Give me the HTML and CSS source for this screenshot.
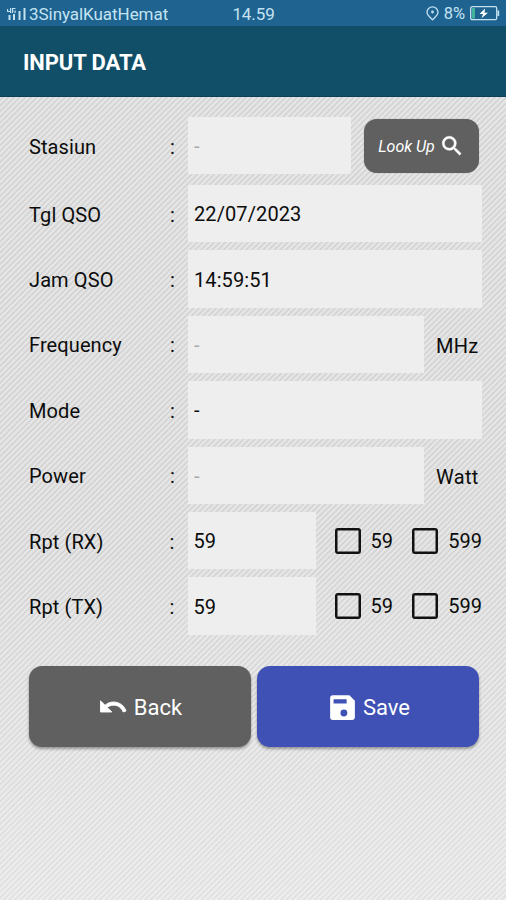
FILE: index.html
```html
<!DOCTYPE html>
<html lang="id">
<head>
    <meta charset="UTF-8">
    <meta name="viewport" content="width=device-width, initial-scale=1.0">
    <title>Input Data</title>
    <link rel="stylesheet" href="styles.css">
</head>
<body>
    <div class="statusbar">
        <div class="carrier">
            <svg class="signal" width="20" height="14" viewBox="0 0 20 14" fill="currentColor">
                <path d="M0 2h1.2v2H3V1h1.2v5H3V5H0zM5 1h3.5v1.1H6.2v3.9H5zM7.5 3.5h1.2V6H7.5z"/>
                <path d="M1.5 8h2v5h-2zM6 7h2v6H6zM11.500 4h2v9h-2zM16.500 1h2v12h-2z"/>
            </svg>
            <span>3SinyalKuatHemat</span>
        </div>
        <span class="clock">14.59</span>
        <div class="status-right">
            <svg width="13" height="15" viewBox="0 0 13 15" fill="none" stroke="currentColor" stroke-width="1.3">
                <path d="M6.5 13.7C4.4 11.6 1 9.2 1 6.2a5.5 5.3 0 0 1 11 0c0 3-3.4 5.4-5.5 7.5z"/>
                <circle cx="6.5" cy="6" r="1.4" fill="currentColor" stroke="none"/>
            </svg>
            <span class="percent">8%</span>
            <svg width="30" height="15" viewBox="0 0 30 15" fill="none">
                <rect x=".7" y=".7" width="26" height="13" rx="1.5" stroke="currentColor" stroke-width="1.3"/>
                <path d="M27.5 4.5h1.7v5.5h-1.7z" fill="currentColor"/>
                <path d="M2 2h3v10.500H2z" fill="#3fb39b"/>
                <path d="M15 2.500L9.500 8H13l-1.500 4.300L18 6.800h-3.500z" fill="#fff"/>
            </svg>
        </div>
    </div>
    <header class="toolbar">
        <h1>INPUT DATA</h1>
    </header>
    <form class="form">
        <div class="row row-first">
            <label for="stasiun">Stasiun</label><span class="colon">:</span>
            <input type="text" class="field field-lookup" id="stasiun" placeholder="-">
            <button type="button" class="btn lookup">
                <span>Look Up</span>
                <svg width="26" height="26" viewBox="0 0 24 24" fill="currentColor" stroke="currentColor" stroke-width=".4"><path d="M15.5 14h-.79l-.28-.27A6.47 6.47 0 0 0 16 9.5 6.5 6.5 0 1 0 9.5 16c1.61 0 3.09-.59 4.23-1.57l.27.28v.79l5 4.99L20.49 19l-4.990-5zm-6 0C7.01 14 5 11.99 5 9.5S7.01 5 9.5 5 14 7.01 14 9.5 11.99 14 9.5 14z"/></svg>
            </button>
        </div>
        <div class="row">
            <label for="tgl">Tgl QSO</label><span class="colon">:</span>
            <input type="text" class="field" id="tgl" value="22/07/2023">
        </div>
        <div class="row">
            <label for="jam">Jam QSO</label><span class="colon">:</span>
            <input type="text" class="field" id="jam" value="14:59:51">
        </div>
        <div class="row">
            <label for="freq">Frequency</label><span class="colon">:</span>
            <input type="text" class="field field-unit" id="freq" placeholder="-">
            <span class="unit">MHz</span>
        </div>
        <div class="row">
            <label for="mode">Mode</label><span class="colon">:</span>
            <input type="text" class="field" id="mode" value="-">
        </div>
        <div class="row">
            <label for="power">Power</label><span class="colon">:</span>
            <input type="text" class="field field-unit" id="power" placeholder="-">
            <span class="unit">Watt</span>
        </div>
        <div class="row">
            <label for="rx">Rpt (RX)</label><span class="colon">:</span>
            <input type="text" class="field field-rpt" id="rx" value="59">
            <label class="check check-59"><input type="checkbox">59</label>
            <label class="check"><input type="checkbox">599</label>
        </div>
        <div class="row">
            <label for="tx">Rpt (TX)</label><span class="colon">:</span>
            <input type="text" class="field field-rpt" id="tx" value="59">
            <label class="check check-59"><input type="checkbox">59</label>
            <label class="check"><input type="checkbox">599</label>
        </div>
        <div class="actions">
            <button type="button" class="btn back">
                <svg width="30" height="30" viewBox="0 0 24 24" fill="currentColor" stroke="currentColor" stroke-width=".7"><path d="M12.5 8c-2.65 0-5.05.99-6.9 2.6L2 7v9h9l-3.62-3.62c1.39-1.16 3.16-1.88 5.12-1.88 3.54 0 6.55 2.31 7.6 5.5l2.37-.78C21.08 11.03 17.15 8 12.5 8z"/></svg>
                <span>Back</span>
            </button>
            <button type="button" class="btn save">
                <svg width="33" height="33" viewBox="0 0 24 24" fill="currentColor"><path d="M17 3H5a2 2 0 0 0-2 2v14a2 2 0 0 0 2 2h14c1.1 0 2-.9 2-2V7l-4-4zm-4 15.500a2.500 2.500 0 1 1 0-5 2.500 2.500 0 0 1 0 5zm2-9.500H5.500V6H15v3z"/></svg>
                <span>Save</span>
            </button>
        </div>
    </form>
</body>
</html>
```

FILE: styles.css
```css
* {
    box-sizing: border-box;
}
body {
    margin: 0;
    min-height: 100vh;
    font-family: Roboto, Arial, sans-serif;
    font-size: 20px;
    color: #0c0c0c;
    background:
        linear-gradient(rgba(255,255,255,0) 60%, rgba(255,255,255,0.3)),
        repeating-linear-gradient(135deg, #e5e5e5 0, #e5e5e5 1.6px, #d3d3d3 2.4px, #d3d3d3 3.2px, #e5e5e5 4px);
}
.statusbar {
    display: grid;
    grid-template-columns: 1fr auto 1fr;
    align-items: center;
    height: 26px;
    padding: 1px 6px 0 7px;
    background: #1f6391;
    color: #c4e3f2;
    font-size: 17px;
}
.carrier {
    display: flex;
    align-items: center;
    gap: 2px;
    letter-spacing: -0.05px;
}
.clock {
    letter-spacing: -0.1px;
}
.status-right {
    display: flex;
    justify-content: flex-end;
    align-items: center;
    gap: 5px;
}
.percent {
    font-size: 16.500px;
}
.toolbar {
    display: flex;
    align-items: center;
    height: 71px;
    padding: 3px 23px 0;
    background: #114f69;
    border-bottom: 1px solid #0c4058;
}
.toolbar h1 {
    margin: 0;
    font-size: 22px;
    font-weight: 700;
    letter-spacing: -0.1px;
    color: #fff;
}
.form {
    padding: 20px 24px 0 29px;
}
.row {
    display: flex;
    align-items: center;
    height: 57.4px;
    margin-bottom: 8px;
}
.row-first {
    margin-bottom: 10.6px;
}
.row > label:first-child {
    width: 141px;
    padding-top: 2px;
    letter-spacing: 0.1px;
}
.colon {
    width: 18px;
    padding-top: 2px;
}
.field {
    flex: none;
    width: 294px;
    height: 100%;
    padding: 1px 6px 0;
    border: none;
    border-radius: 0;
    background: #eee;
    font: inherit;
    letter-spacing: 0.1px;
    color: #0c0c0c;
    outline: none;
}
.field::placeholder {
    color: #aaa;
}
.field-lookup {
    width: 163px;
    margin-right: 13px;
}
.field-unit {
    width: 236px;
    margin-right: 12px;
}
.unit {
    padding-top: 3px;
    letter-spacing: 0.3px;
}
.field-rpt {
    width: 128px;
    margin-right: 19px;
}
.check {
    display: flex;
    align-items: center;
    gap: 10px;
}
.check-59 {
    width: 78px;
}
.check input {
    appearance: none;
    width: 26px;
    height: 26px;
    margin: 0;
    border: 2px solid #111;
    border-radius: 3px;
    box-shadow: inset 0 0 0 0.5px #111;
}
.btn {
    display: flex;
    align-items: center;
    justify-content: center;
    border: none;
    border-radius: 13px;
    background: #606060;
    color: #fff;
    font-family: inherit;
    box-shadow: 0 2px 3px rgba(0,0,0,0.35);
}
.lookup {
    width: 115px;
    height: 54px;
    gap: 4px;
    padding: 1px 0 0;
    font-size: 16px;
    font-style: italic;
    box-shadow: 0 0 1px rgba(0,0,0,0.4);
}
.actions {
    display: flex;
    gap: 6px;
    padding: 23px 3px 0 0;
}
.actions .btn {
    flex: 1;
    height: 81px;
    padding-top: 3px;
    font-size: 22px;
}
.back {
    gap: 6px;
}
.actions .save {
    gap: 4px;
    background: #3f51b5;
}
```
